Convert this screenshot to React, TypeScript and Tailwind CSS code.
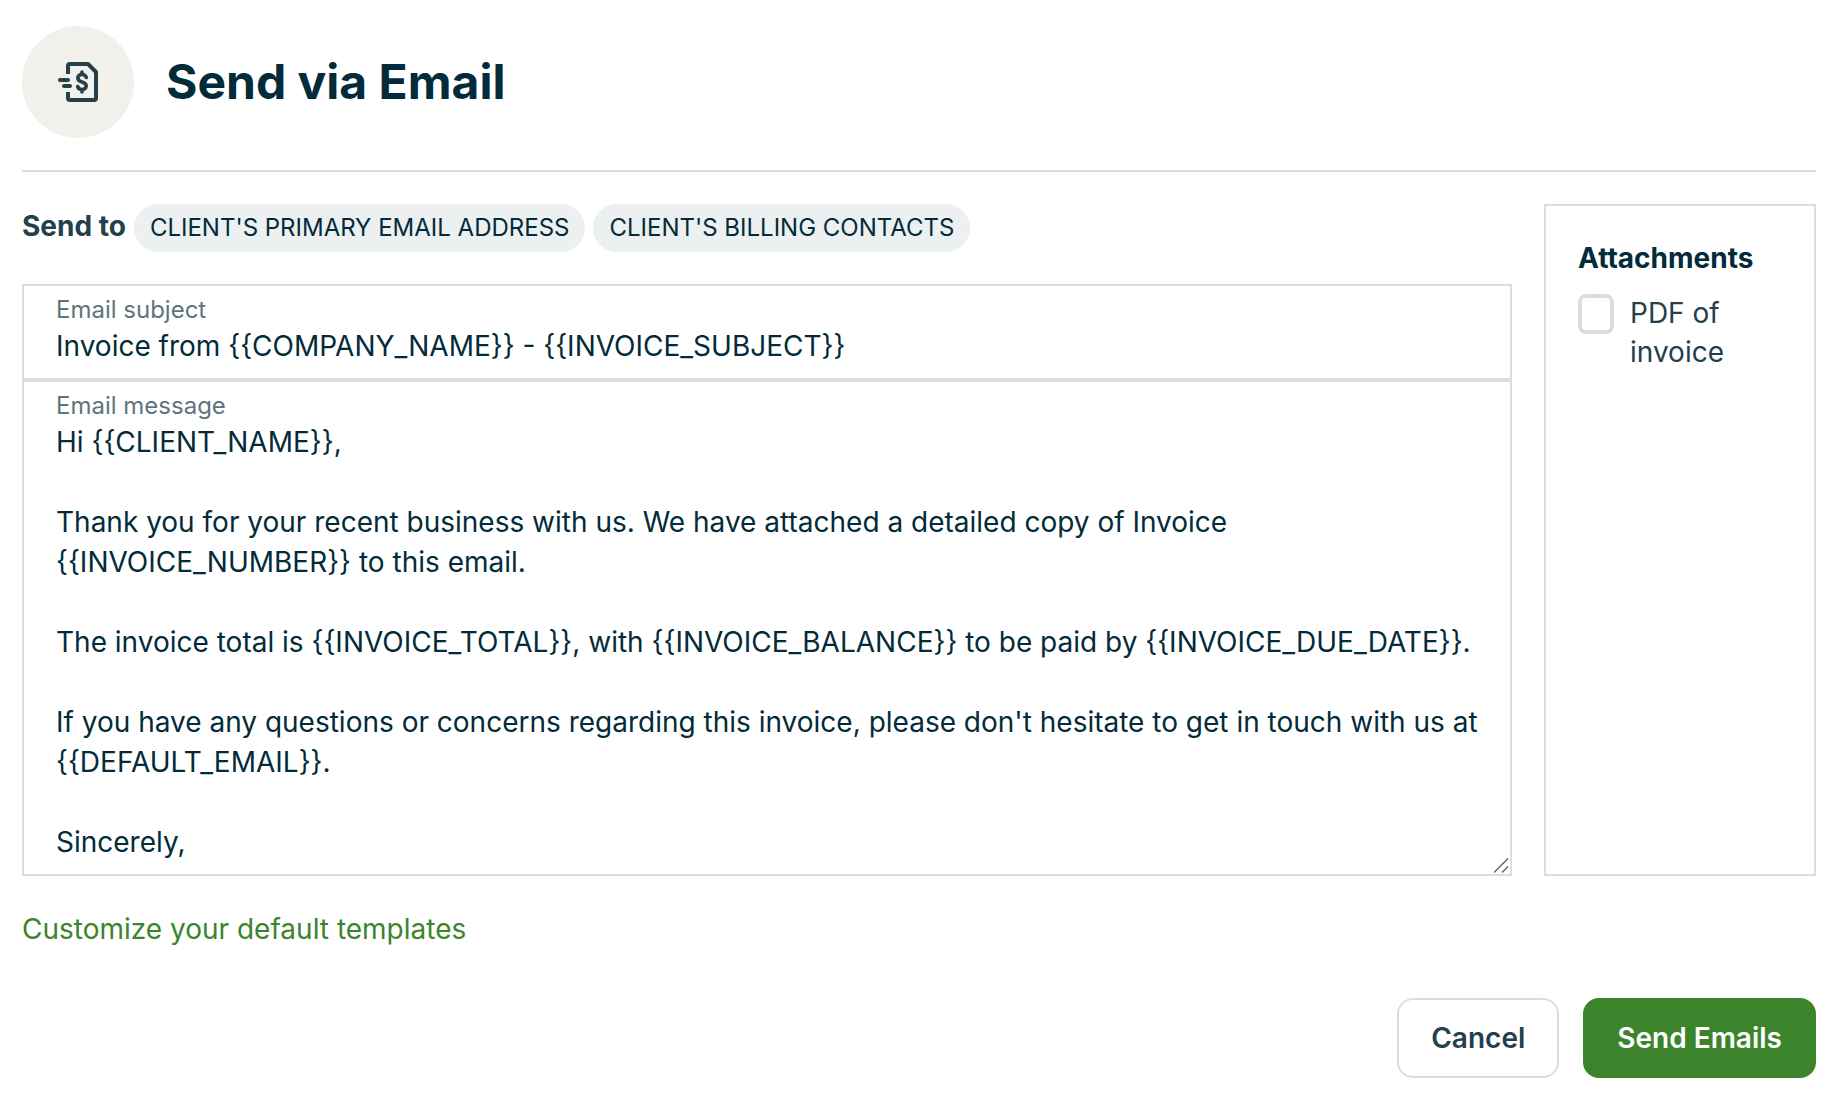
import React, { useState } from "react";

const RECIPIENTS = ["CLIENT'S PRIMARY EMAIL ADDRESS", "CLIENT'S BILLING CONTACTS"];

const DEFAULT_SUBJECT = "Invoice from {{COMPANY_NAME}} - {{INVOICE_SUBJECT}}";

const DEFAULT_MESSAGE = `Hi {{CLIENT_NAME}},

Thank you for your recent business with us. We have attached a detailed copy of Invoice {{INVOICE_NUMBER}} to this email.

The invoice total is {{INVOICE_TOTAL}}, with {{INVOICE_BALANCE}} to be paid by {{INVOICE_DUE_DATE}}.

If you have any questions or concerns regarding this invoice, please don't hesitate to get in touch with us at {{DEFAULT_EMAIL}}.

Sincerely,`;

function SendInvoiceIcon() {
  return (
    <svg
      viewBox="0 0 40 40"
      className="size-10 text-[#24404b]"
      fill="none"
      stroke="currentColor"
      strokeWidth="4"
      aria-hidden="true"
    >
      <path d="M10 12V4a2 2 0 0 1 2-2h18l8 8v26a2 2 0 0 1-2 2H12a2 2 0 0 1-2-2v-6" strokeLinejoin="round" />
      <path d="M2 18h8M6 24h6" strokeLinecap="round" />
      <path
        d="M28.3 15.5c-.6-2-2.3-3-4.3-3-2.4 0-4.2 1.4-4.2 3.6 0 2.3 1.8 3.2 4.2 3.9 2.4.7 4.2 1.6 4.2 3.9 0 2.2-1.8 3.6-4.2 3.6-2.1 0-3.8-1.1-4.3-3M24 10v2M24 28v2"
        strokeWidth="3.6"
        strokeLinecap="round"
      />
    </svg>
  );
}

export default function App() {
  const [subject, setSubject] = useState(DEFAULT_SUBJECT);
  const [message, setMessage] = useState(DEFAULT_MESSAGE);
  const [attachPdf, setAttachPdf] = useState(false);

  return (
    <form
      className="bg-white pt-[26px] pr-6 pb-[30px] pl-[22px] font-['Inter',sans-serif] text-[28px] leading-10 text-[#24404b]"
      onSubmit={(e) => e.preventDefault()}
    >
      <header className="flex items-center gap-8 border-b-2 border-[#d9dfe1] pb-8">
        <div className="flex size-28 shrink-0 items-center justify-center rounded-full bg-[#f1f0eb]">
          <SendInvoiceIcon />
        </div>
        <h1 className="text-5xl font-bold text-[#032b3a]">Send via Email</h1>
      </header>

      <div className="mt-8 flex gap-8">
        <div className="min-w-0 flex-1">
          <div className="flex flex-wrap items-baseline gap-2">
            <span className="font-bold">Send to</span>
            {RECIPIENTS.map((name) => (
              <span key={name} className="h-12 rounded-full bg-[#ecf0f1] px-4 text-2xl leading-[48px] text-[#032b3a]">
                {name}
              </span>
            ))}
          </div>

          <div className="mt-8 border-2 border-[#d9dfe1] px-8 pt-2 pb-3">
            <label htmlFor="subject" className="block text-2xl leading-8 text-[#5f757d]">
              Email subject
            </label>
            <input
              id="subject"
              type="text"
              className="block w-full text-[#032b3a] outline-none"
              value={subject}
              onChange={(e) => setSubject(e.target.value)}
            />
          </div>

          <div className="relative border-2 border-[#d9dfe1] pt-2 pb-3">
            <label htmlFor="message" className="block px-8 text-2xl leading-8 text-[#5f757d]">
              Email message
            </label>
            <textarea
              id="message"
              rows={11}
              className="block w-full resize-none overflow-hidden px-8 text-[#032b3a] outline-none"
              value={message}
              onChange={(e) => setMessage(e.target.value)}
            />
            {/* resize grip */}
            <svg
              viewBox="0 0 16 16"
              className="pointer-events-none absolute right-0 bottom-0 size-4"
              stroke="#666666"
              strokeWidth="1.5"
              aria-hidden="true"
            >
              <path d="M0 14.5L14 .5M8 14.5L14 8.5" />
            </svg>
          </div>
        </div>

        <aside className="w-[272px] shrink-0 border-2 border-[#d9dfe1] p-8">
          <h2 className="font-bold text-[#032b3a]">Attachments</h2>
          <label className="mt-4 flex items-start gap-4 leading-[39px]">
            <input
              type="checkbox"
              className="h-10 w-9 shrink-0 appearance-none rounded-lg border-4 border-[#d9dfe1] checked:bg-[#3c842c]"
              checked={attachPdf}
              onChange={(e) => setAttachPdf(e.target.checked)}
            />
            <span>PDF of invoice</span>
          </label>
        </aside>
      </div>

      <a href="#templates" className="mt-8 inline-block leading-[42px] text-[#3c842c]">
        Customize your default templates
      </a>

      <div className="mt-12 flex justify-end gap-6 font-semibold">
        <button type="button" className="h-20 rounded-2xl border-2 border-[#d9dfe1] px-8">
          Cancel
        </button>
        <button type="submit" className="h-20 rounded-2xl border-2 border-[#3c842c] bg-[#3c842c] px-8 text-white">
          Send Emails
        </button>
      </div>
    </form>
  );
}
